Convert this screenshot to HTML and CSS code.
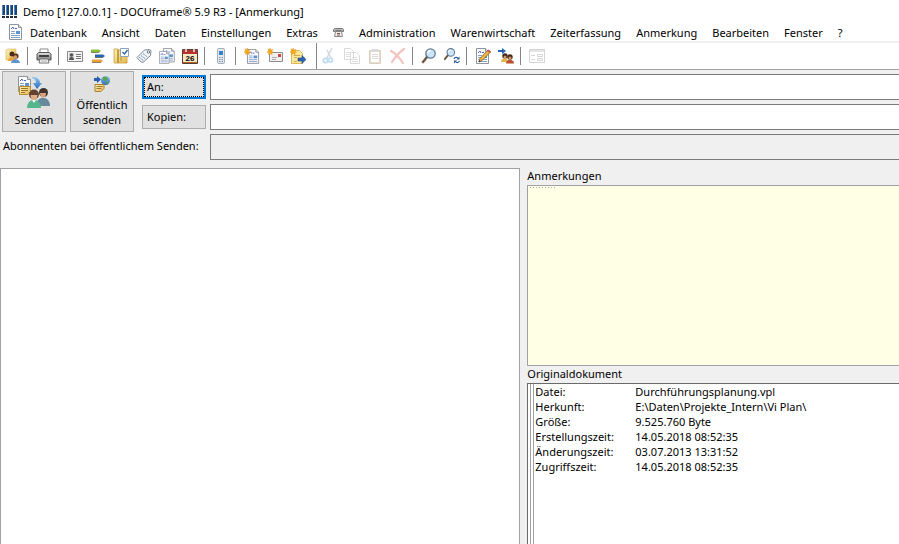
FILE: index.html
```html
<!DOCTYPE html>
<html lang="de">
<head>
    <meta charset="utf-8">
    <title>DOCUframe - Anmerkung</title>
    <link rel="stylesheet" href="styles.css">
</head>
<body>

    <!-- shared icon parts -->
    <svg class="defs" width="0" height="0" aria-hidden="true">
        <defs>
            <linearGradient id="sky" x1="0" y1="0" x2="0" y2="1">
                <stop offset="0" stop-color="#8fc4ee" />
                <stop offset="1" stop-color="#256dbb" />
            </linearGradient>
            <linearGradient id="gold" x1="0" y1="0" x2="1" y2="1">
                <stop offset="0" stop-color="#fdf3b8" />
                <stop offset="1" stop-color="#e3b84c" />
            </linearGradient>
            <linearGradient id="steel" x1="0" y1="0" x2="0" y2="1">
                <stop offset="0" stop-color="#e8e8e8" />
                <stop offset="1" stop-color="#777" />
            </linearGradient>
            <g id="page">
                <path d="M.5 .5h9l3 3v12h-12z" fill="#fdfdff" stroke="#8f959c" />
                <path d="M9.500 .5v3h3" fill="#dfe3e8" stroke="#8f959c" />
                <path d="M2 5l2-2 1 2M6 4.500h2" fill="none" stroke="#4d63c4" />
                <path d="M2 7.500h4M2 9.500h4M2 11.500h9M2 13.500h9" stroke="#8aa2c6" />
                <path d="M7 7h4v3h-4z" fill="#5d93cf" />
            </g>
            <path id="star" d="M4 0l1 2.500L7.500 1.500 6 4l2.500 1.500L6 6l.5 2.500L4 7 2 8.500 2 6 0 5l2-1.500L1 1l2 1z" fill="#f5a91d" stroke="#d98a17" stroke-width=".4" />
            <g id="glass">
                <path d="M5 9L1 14" stroke="#8a6a4c" stroke-width="2.600" stroke-linecap="round" />
                <path d="M5 9L1 14" stroke="#444" stroke-width="1" />
                <circle cx="8.500" cy="5.500" r="4.700" fill="#cbe5fa" stroke="#62788f" stroke-width="1.300" />
                <path d="M5.500 5a3 3 0 0 1 3-2.500" fill="none" stroke="#fff" stroke-width="1.300" />
            </g>
        </defs>
    </svg>

    <header class="titlebar">
        <svg class="titlebar__logo" viewBox="0 0 16 14" width="16" height="14">
            <path d="M0 0h3v10h-3zM4 0h3v10h-3zM8 0h3v10h-3zM12 0h3v10h-3z" fill="#1c4575" />
            <path d="M0 0h1v10h-1zM4 0h1v10h-1zM8 0h1v10h-1zM12 0h1v10h-1z" fill="#4f86c0" />
            <path d="M0 11h3v2h-3zM4 11h3v2h-3zM8 11h3v2h-3zM12 11h3v2h-3z" fill="#222c3c" />
        </svg>
        <h1 class="titlebar__text">Demo [127.0.0.1] - DOCUframe® 5.9 R3 - [Anmerkung]</h1>
    </header>

    <nav class="menu">
        <svg class="menu__doc" viewBox="0 0 13 16" width="13" height="16"><use href="#page" /></svg>
        <a href="#">Datenbank</a>
        <a href="#">Ansicht</a>
        <a href="#">Daten</a>
        <a href="#">Einstellungen</a>
        <a href="#">Extras</a>
        <a href="#" aria-label="Telefon">
            <svg viewBox="0 0 11 9" width="11" height="9">
                <path d="M.5 3.500v-2l1-1h8l1 1v2h-2v-1h-6v1z" fill="#bbb" stroke="#777" />
                <path d="M2.500 3.500h6l1 5h-8z" fill="#eee" stroke="#888" />
                <path d="M4 5.500h3M4 7h3" stroke="#8b5b50" />
            </svg>
        </a>
        <a href="#">Administration</a>
        <a href="#">Warenwirtschaft</a>
        <a href="#">Zeiterfassung</a>
        <a href="#">Anmerkung</a>
        <a href="#">Bearbeiten</a>
        <a href="#">Fenster</a>
        <a href="#">?</a>
    </nav>

    <div class="toolbar">
        <button class="tool" aria-label="Benutzer">
            <svg viewBox="0 0 16 16">
                <path d="M1 2l2-1h8v11H1z" fill="url(#gold)" stroke="#d9b45a" stroke-width=".6" />
                <circle cx="7" cy="6" r="2.500" fill="#4b2d1d" />
                <path d="M3 13c0-5 7-5 7 0z" fill="#e8a33c" />
                <circle cx="11" cy="8" r="2.600" fill="#5a3422" />
                <circle cx="10.500" cy="9" r="1.700" fill="#d79b72" />
                <path d="M6 15c1-5 8-5 9 0z" fill="#5b93d6" />
            </svg>
        </button>
        <span class="sep"></span>
        <button class="tool" aria-label="Drucken">
            <svg viewBox="0 0 16 16">
                <path d="M4 1h8v5H4z" fill="#fff" stroke="#888" />
                <path d="M1 6l2-1.500h10L15 6v6H1z" fill="url(#steel)" stroke="#555" />
                <path d="M3 7h10v2H3z" fill="#3e3e3e" />
                <path d="M4 11h8l1 4H3z" fill="#fafafa" stroke="#777" />
                <path d="M5 13h6" stroke="#aaa" />
            </svg>
        </button>
        <span class="sep"></span>
        <button class="tool" aria-label="Adressen">
            <svg viewBox="0 0 16 16">
                <path d="M.5 3.500h15v10H.5z" fill="#f4f4f4" stroke="#85888c" />
                <path d="M2 5h5v7H2z" fill="#ccc" />
                <circle cx="4.500" cy="7" r="1.700" fill="#555" />
                <path d="M2 12c0-4 5-4 5 0z" fill="#555" />
                <path d="M9 6.500h5M9 8.500h5M9 10.500h5" stroke="#777" />
            </svg>
        </button>
        <button class="tool" aria-label="Projekte">
            <svg viewBox="0 0 16 16">
                <path d="M1 1.500h8l2 1.500-2 1.500H1z" fill="#8bbd36" />
                <path d="M5 6.500h8l2 1.500-2 1.500H5z" fill="#2468b7" />
                <path d="M2 11.500h9l2 1.500-2 1.500H2z" fill="#eba13b" />
                <path d="M1 4.500h8M5 9.500h8M2 14.500h9" stroke="#5a5b4f" stroke-width=".7" />
            </svg>
        </button>
        <button class="tool" aria-label="Aufgaben">
            <svg viewBox="0 0 16 16">
                <path d="M1 1h4v14H1zM5 2h9v13H5z" fill="url(#gold)" stroke="#c79c3b" stroke-width=".8" />
                <path d="M5 2v13" stroke="#b78a2c" />
                <path d="M8 9v4" stroke="#b78a2c" />
                <path d="M7.500 .5h8v8h-8z" fill="#fff" stroke="#8ba4bb" />
                <path d="M9.500 4l2 2 3-4" fill="none" stroke="#2e68a8" stroke-width="1.400" />
            </svg>
        </button>
        <button class="tool" aria-label="Etikett">
            <svg viewBox="0 0 16 16">
                <path d="M1 9.500L8.500 2l5-.5 1.500 1-.5 5L7 14.500q-3 0-6-5z" fill="#f1f4f7" stroke="#7c8b98" />
                <circle cx="12.500" cy="4" r="1.200" fill="#fff" stroke="#687785" />
                <path d="M3 9l5 4M5 7.500l4.500 3.500M7 5.500l4.500 3.500" stroke="#6e8eab" stroke-dasharray="2 1" />
            </svg>
        </button>
        <button class="tool" aria-label="Dokumente">
            <svg viewBox="0 0 16 16">
                <use href="#page" transform="translate(4 0) scale(.9)" />
                <use href="#page" transform="translate(0 3) scale(.8)" />
            </svg>
        </button>
        <button class="tool" aria-label="Kalender">
            <svg viewBox="0 0 16 16">
                <path d="M.5 1.500h15v14H.5z" fill="#f8e8c4" stroke="#5e3d32" />
                <path d="M1 2h14v4H1z" fill="#b5342d" />
                <path d="M4 0v4M12 0v4" stroke="#eee" stroke-width="1.500" />
                <path d="M1 14.500h14" stroke="#a7642e" />
                <text class="tool__day" x="8" y="13" text-anchor="middle">26</text>
            </svg>
        </button>
        <span class="sep"></span>
        <button class="tool" aria-label="Mobiltelefon">
            <svg viewBox="0 0 16 16">
                <rect x="4.500" y=".5" width="7" height="15" rx="1.500" fill="#e4e9ef" stroke="#a3adb8" />
                <path d="M6 3h4v4H6z" fill="#3381cf" />
                <path d="M6 9.500h4M6 11.500h4M6 13.500h4" stroke="#7f93a9" stroke-dasharray="1 .5" />
            </svg>
        </button>
        <span class="sep"></span>
        <button class="tool" aria-label="Neues Dokument">
            <svg viewBox="0 0 16 16">
                <use href="#page" transform="translate(3 1) scale(.93)" />
                <use href="#star" transform="scale(.8)" />
            </svg>
        </button>
        <button class="tool" aria-label="Neue Nachricht">
            <svg viewBox="0 0 16 16">
                <path d="M2.500 4.500h13v9h-13z" fill="#f0f0ee" stroke="#8c8c8c" />
                <path d="M11 6h3v3h-3z" fill="#d2433b" />
                <path d="M5 9.500h5M5 11.500h4" stroke="#aaa" />
                <use href="#star" transform="scale(.8)" />
            </svg>
        </button>
        <button class="tool" aria-label="Neue Notiz">
            <svg viewBox="0 0 16 16">
                <path d="M1.500 2.500h8l3 3v10h-11z" fill="#fbe99a" stroke="#d9b95a" />
                <path d="M4 7.500h6M4 9.500h3M4 13.500h3" stroke="#d0a94a" />
                <path d="M8 10h4V7.500l4 4-4 4V13H8z" fill="#2c64b5" stroke="#173f85" stroke-width=".6" />
                <use href="#star" transform="scale(.8)" />
            </svg>
        </button>
        <span class="sep sep--group"></span>
        <button class="tool tool--off" aria-label="Ausschneiden" disabled>
            <svg viewBox="0 0 16 16">
                <path d="M11 0L6 10M6 2l4 8" stroke="#75879b" stroke-width="1.600" />
                <circle cx="4.500" cy="12.500" r="2.200" fill="none" stroke="#2c8fd2" stroke-width="1.700" />
                <circle cx="9.500" cy="12" r="2" fill="none" stroke="#2c8fd2" stroke-width="1.700" />
            </svg>
        </button>
        <button class="tool tool--off" aria-label="Kopieren" disabled>
            <svg viewBox="0 0 16 16">
                <path d="M.5 .5h6l3 3v8h-9zM6.500 4.500h6l3 3v8h-9z" fill="#fff" stroke="#888" />
                <path d="M2 4.500h4M2 6.500h4M2 8.500h4M8 9.500h5M8 11.500h6M8 13.500h6" stroke="#999" />
            </svg>
        </button>
        <button class="tool tool--off" aria-label="Einfügen" disabled>
            <svg viewBox="0 0 16 16">
                <path d="M2.500 2.500h11v13h-11z" fill="#c39152" stroke="#83673e" />
                <path d="M4 4h8v10H4z" fill="#fff" />
                <path d="M5 1h6v3H5z" fill="#888" />
                <path d="M5 6.500h6M5 8.500h6M5 10.500h6" stroke="#888" />
            </svg>
        </button>
        <button class="tool tool--off" aria-label="Löschen" disabled>
            <svg viewBox="0 0 16 16">
                <path d="M1 3q6 3 12 12M14 1Q8 5 2 14" fill="none" stroke="#d63b30" stroke-width="2.200" stroke-linecap="round" />
            </svg>
        </button>
        <span class="sep"></span>
        <button class="tool" aria-label="Suchen">
            <svg viewBox="0 0 16 16"><use href="#glass" transform="translate(1 0)" /></svg>
        </button>
        <button class="tool" aria-label="Weitersuchen">
            <svg viewBox="0 0 16 16">
                <use href="#glass" transform="scale(.8)" />
                <path d="M10 11c1-2 3-2 4-.5M15.500 13c-1 2-3 2-4 .5" fill="none" stroke="#2c5c9d" stroke-width="1.200" />
                <path d="M15.500 8.500v3h-3zM10 15.500v-3h3z" fill="#2c5c9d" />
            </svg>
        </button>
        <span class="sep"></span>
        <button class="tool" aria-label="Bearbeiten">
            <svg viewBox="0 0 16 16">
                <use href="#page" transform="translate(1 0)" />
                <path d="M4 14L5 10.500 13 2l2.500 2L7 12.500z" fill="#f0b83c" stroke="#80571e" stroke-width=".8" />
                <path d="M12 3l1.500-1.500L16 3.500 14.500 5z" fill="#cf5853" />
                <path d="M4 14l.5-1.500 1 .8z" fill="#222" />
            </svg>
        </button>
        <button class="tool" aria-label="Weiterleiten">
            <svg viewBox="0 0 16 16">
                <path d="M0 2h4V0l4 3-4 3V4H0z" fill="#2462b5" />
                <circle cx="7" cy="8" r="2.700" fill="#3f241b" />
                <path d="M3 14c0-5 7-5 7 0z" fill="#e7b44b" />
                <circle cx="7" cy="9" r="1.500" fill="#d29a68" />
                <circle cx="12" cy="9" r="2.700" fill="#4a271b" />
                <circle cx="12" cy="10" r="1.500" fill="#d29a68" />
                <path d="M8 15.500c0-5 8-5 8 0z" fill="#b94f2e" />
            </svg>
        </button>
        <span class="sep"></span>
        <button class="tool tool--off" aria-label="Formular" disabled>
            <svg viewBox="0 0 16 16">
                <path d="M.5 1.500h15v13H.5z" fill="#fff" stroke="#777" />
                <path d="M1 2h14v2H1z" fill="#aaa" />
                <path d="M2 7.500h4M2 11.500h4" stroke="#777" />
                <path d="M8.500 6.500h5v2h-5zM8.500 10.500h5v2h-5z" fill="none" stroke="#777" />
            </svg>
        </button>
    </div>

    <form class="send">
        <div class="send__actions">
            <button type="button" class="big">
                <svg viewBox="0 0 32 32" width="32" height="32">
                    <use href="#page" />
                    <path d="M1.500 10.500h11v6l-3 2h-8z" fill="url(#gold)" stroke="#b98b2d" />
                    <path d="M3 12.500h7M3 14.500h7M3 16.500h4" stroke="#9d7428" />
                    <path d="M14 1c6 0 8 3 8 6h2l-5 6-4-6h3c0-3-1-4-4-5z" fill="url(#sky)" />
                    <circle cx="25.500" cy="16.500" r="4.500" fill="#40342d" />
                    <path d="M22 17h6c0 6-6 6-6 0z" fill="#dca27c" />
                    <path d="M18 30c0-11 14-11 14 0z" fill="#668a9b" />
                    <circle cx="16" cy="18.500" r="5" fill="#634231" />
                    <path d="M12.500 19h7c0 7-7 7-7 0z" fill="#e1ad87" />
                    <path d="M9 32c0-11 14-11 14 0z" fill="#55b58c" />
                    <path d="M14 24l2 3 2-3z" fill="#fff" />
                </svg>
                <span>Senden</span>
            </button>
            <button type="button" class="big">
                <svg viewBox="0 0 16 16" width="16" height="16">
                    <circle cx="11.500" cy="4.500" r="4.500" fill="url(#sky)" />
                    <path d="M9 1q4-1 5 2l-3 2-2-1zM12 6l3-1-2 4z" fill="#5ca545" />
                    <path d="M0 2h3V0l4 3.500L3 7V5H0z" fill="#265db1" />
                    <path d="M1 8.500h9v4l-3 3H1z" fill="url(#gold)" stroke="#a98130" />
                    <path d="M2.500 10.500h6M2.500 12.500h5" stroke="#9b7a35" />
                </svg>
                <span>Öffentlich<br>senden</span>
            </button>
            <div class="send__pick">
                <button type="button" class="pick pick--focus">An:</button>
                <button type="button" class="pick">Kopien:</button>
            </div>
        </div>
        <label class="send__label" for="abos">Abonnenten bei öffentlichem Senden:</label>
        <div class="send__fields">
            <input type="text" class="field" aria-label="An">
            <input type="text" class="field" aria-label="Kopien">
            <input type="text" class="field field--readonly" id="abos" readonly>
        </div>
    </form>

    <main class="work">
        <textarea class="editor" aria-label="Text"></textarea>
        <section class="side">
            <label class="side__title" for="notes">Anmerkungen</label>
            <textarea class="notes" id="notes"></textarea>
            <h2 class="side__title">Originaldokument</h2>
            <div class="original">
                <table class="original__data">
                    <tr><th scope="row">Datei:</th><td>Durchführungsplanung.vpl</td></tr>
                    <tr><th scope="row">Herkunft:</th><td>E:\Daten\Projekte_Intern\Vi Plan\</td></tr>
                    <tr><th scope="row">Größe:</th><td>9.525.760 Byte</td></tr>
                    <tr><th scope="row">Erstellungszeit:</th><td>14.05.2018 08:52:35</td></tr>
                    <tr><th scope="row">Änderungszeit:</th><td>03.07.2013 13:31:52</td></tr>
                    <tr><th scope="row">Zugriffszeit:</th><td>14.05.2018 08:52:35</td></tr>
                </table>
            </div>
        </section>
    </main>

</body>
</html>
```
FILE: styles.css
```css
* {
    box-sizing: border-box;
    margin: 0;
    padding: 0;
}
:root {
    --face: #f0f0f0;
    --edge: #a0a0a6;
    --dark: #6a6a6a;
}
body {
    display: flex;
    flex-direction: column;
    height: 100vh;
    overflow: hidden;
    background: var(--face);
    color: #000;
    font: 11px/15px "Noto Sans", "Open Sans", sans-serif;
}
button,
input,
textarea {
    font: inherit;
    color: inherit;
    border-radius: 0;
    outline: none;
}
.defs {
    position: absolute;
}

/* Title and menu */
.titlebar {
    display: flex;
    align-items: center;
    gap: 5px;
    height: 23px;
    padding-left: 2px;
    background: #fff;
}
.titlebar__text,
.side__title {
    font-size: 11px;
    font-weight: normal;
}
.menu {
    display: flex;
    align-items: center;
    gap: 15px;
    height: 18px;
    padding-left: 9px;
    background: #fff;
    white-space: nowrap;
}
.menu__doc {
    margin-right: -7px;
}
.menu a {
    color: inherit;
    text-decoration: none;
}

/* Toolbar */
.toolbar {
    display: flex;
    align-items: center;
    height: 29px;
    padding-left: 1px;
    background: #fff;
    border-top: 2px solid var(--face);
    border-bottom: 1px solid var(--edge);
}
.tool {
    display: grid;
    place-items: center;
    width: 23px;
    height: 22px;
    border: 0;
    background: none;
}
.tool svg {
    width: 16px;
    height: 16px;
}
.tool--off {
    opacity: .3;
}
.tool__day {
    font: bold 8px "Liberation Sans", sans-serif;
}
.sep {
    width: 8px;
    height: 18px;
    background: linear-gradient(#858585, #858585) 3px 0 / 1px 100% no-repeat;
}
.sep--group {
    height: 26px;
    background-position: right;
}

/* Recipients */
.send {
    display: grid;
    grid-template-columns: auto 1fr;
    grid-template-rows: 61px auto;
    column-gap: 4px;
    padding-top: 1px;
}
.send__actions {
    display: flex;
    gap: 4px;
    padding-left: 2px;
}
.big,
.pick {
    width: 64px;
    background: #e1e1e1;
    border: 1px solid #adadad;
}
.big {
    display: flex;
    flex-direction: column;
    align-items: center;
    justify-content: space-between;
    padding: 4px 0;
}
.send__pick {
    display: flex;
    flex-direction: column;
    gap: 6px;
    padding: 4px 0 0 4px;
}
.pick {
    height: 24px;
    padding: 0 0 2px 4px;
    text-align: left;
}
.pick--focus {
    padding-left: 3px;
    border: 2px solid #0078d7;
    outline: 1px dotted #000;
    outline-offset: -3px;
}
.send__label {
    grid-row: 2;
    width: 202px;
    padding: 6px 0 0 3px;
    white-space: nowrap;
}
.send__fields {
    grid-column: 2;
    grid-row: 1 / 3;
    display: flex;
    flex-direction: column;
    gap: 4px;
    padding-top: 3px;
}
.field {
    width: 100%;
    height: 26px;
    padding: 0 4px;
    background: #fff;
    border: 1px solid #7a7a7a;
    border-right: 0;
}
.field--readonly {
    background: var(--face);
}

/* Editor and side panel */
.work {
    flex: 1;
    min-height: 0;
    display: grid;
    grid-template-columns: 7fr 5fr;
    gap: 7px;
    padding-top: 8px;
}
.editor,
.notes {
    width: 100%;
    resize: none;
    border: 1px solid var(--edge);
}
.editor {
    height: 100%;
    border-bottom: 0;
}
.side {
    display: flex;
    flex-direction: column;
    min-height: 0;
}
.side__title {
    padding-bottom: 2px;
}
.notes {
    flex: 0 0 181px;
    border-right: 0;
    background: repeating-linear-gradient(90deg, #aaa 0 1px, transparent 1px 3px) 2px 1px / 26px 1px no-repeat #ffffe6;
}
.original {
    flex: 1;
    padding-left: 2px;
    background: #fff;
    border: 1px solid var(--dark);
    border-width: 1px 0 0 1px;
}
.original__data {
    display: block;
    height: 100%;
    padding-left: 1px;
    border-left: 4px double var(--edge);
    border-spacing: 0;
}
.original__data th {
    width: 100px;
    font-weight: normal;
    text-align: left;
}
```
